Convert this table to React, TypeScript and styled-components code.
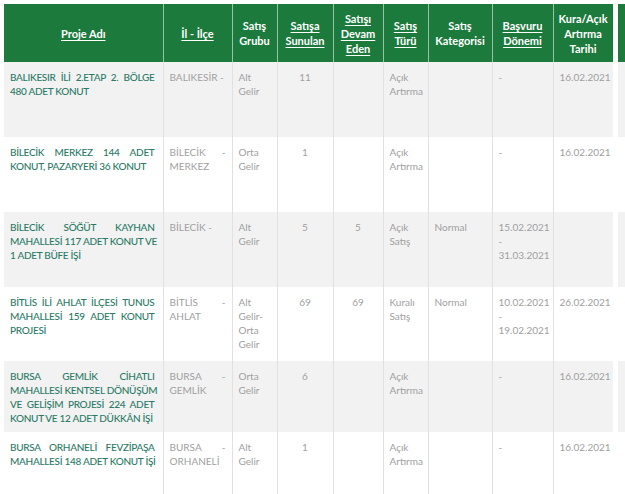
import React from "react";
import styled, { createGlobalStyle } from "styled-components";

const GlobalStyle = createGlobalStyle`
  html, body {
    margin: 0;
    padding: 0;
    background: #ffffff;
    overflow: hidden;
  }
  body {
    font-family: Lato, "Open Sans", Arial, sans-serif;
  }
`;

type Column = { title: string[]; width: number; sortable?: boolean };

const columns: Column[] = [
  { title: ["Proje Adı"], width: 159, sortable: true },
  { title: ["İl - İlçe"], width: 69, sortable: true },
  { title: ["Satış", "Grubu"], width: 45 },
  { title: ["Satışa", "Sunulan"], width: 56, sortable: true },
  { title: ["Satışı", "Devam", "Eden"], width: 50, sortable: true },
  { title: ["Satış", "Türü"], width: 45, sortable: true },
  { title: ["Satış", "Kategorisi"], width: 64 },
  { title: ["Başvuru", "Dönemi"], width: 61, sortable: true },
  { title: ["Kura/Açık", "Artırma", "Tarihi"], width: 62 },
  { title: [""], width: 10 },
];

type Row = {
  name: string[];
  place: string;
  group: string;
  offered: string;
  ongoing: string;
  type: string;
  category: string;
  period: string;
  date: string;
  height: number;
};

const rows: Row[] = [
  {
    name: ["BALIKESIR İLİ 2.ETAP 2. BÖLGE", "480 ADET KONUT"],
    place: "BALIKESİR -",
    group: "Alt Gelir",
    offered: "11",
    ongoing: "",
    type: "Açık Artırma",
    category: "",
    period: "-",
    date: "16.02.2021",
    height: 75,
  },
  {
    name: ["BİLECİK MERKEZ 144 ADET", "KONUT, PAZARYERİ 36 KONUT"],
    place: "BİLECİK - MERKEZ",
    group: "Orta Gelir",
    offered: "1",
    ongoing: "",
    type: "Açık Artırma",
    category: "",
    period: "-",
    date: "16.02.2021",
    height: 75,
  },
  {
    name: ["BİLECİK SÖĞÜT KAYHAN", "MAHALLESİ 117 ADET KONUT VE", "1 ADET BÜFE İŞİ"],
    place: "BİLECİK -",
    group: "Alt Gelir",
    offered: "5",
    ongoing: "5",
    type: "Açık Satış",
    category: "Normal",
    period: "15.02.2021 - 31.03.2021",
    date: "",
    height: 75,
  },
  {
    name: ["BİTLİS İLİ AHLAT İLÇESİ TUNUS", "MAHALLESİ 159 ADET KONUT", "PROJESİ"],
    place: "BİTLİS - AHLAT",
    group: "Alt Gelir- Orta Gelir",
    offered: "69",
    ongoing: "69",
    type: "Kuralı Satış",
    category: "Normal",
    period: "10.02.2021 - 19.02.2021",
    date: "26.02.2021",
    height: 74,
  },
  {
    name: [
      "BURSA GEMLİK CİHATLI",
      "MAHALLESİ KENTSEL DÖNÜŞÜM",
      "VE GELİŞİM PROJESİ 224 ADET",
      "KONUT VE 12 ADET DÜKKÂN İŞİ",
    ],
    place: "BURSA - GEMLİK",
    group: "Orta Gelir",
    offered: "6",
    ongoing: "",
    type: "Açık Artırma",
    category: "",
    period: "-",
    date: "16.02.2021",
    height: 71,
  },
  {
    name: ["BURSA ORHANELİ FEVZİPAŞA", "MAHALLESİ 148 ADET KONUT İŞİ"],
    place: "BURSA - ORHANELİ",
    group: "Alt Gelir",
    offered: "1",
    ongoing: "",
    type: "Açık Artırma",
    category: "",
    period: "-",
    date: "16.02.2021",
    height: 75,
  },
];

const Page = styled.div`
  padding: 4px 0 0 4px;
`;

const Table = styled.table`
  table-layout: fixed;
  border-collapse: collapse;
  width: 621px;
`;

const HeadCell = styled.th<{ $last?: boolean }>`
  background: #1d7a3d;
  color: #ffffff;
  font-size: 11px;
  font-weight: 700;
  line-height: 15px;
  height: 58px;
  padding: 0 2px;
  text-align: center;
  vertical-align: middle;
  border-right: 1px solid rgba(255, 255, 255, 0.55);
  border-left: ${(p) => (p.$last ? "5px solid #ffffff" : "0")};
`;

const HeadLabel = styled.span<{ $sortable?: boolean }>`
  text-decoration: ${(p) => (p.$sortable ? "underline" : "none")};
  text-underline-offset: 2px;
`;

const BodyRow = styled.tr<{ $shade: boolean }>`
  background: ${(p) => (p.$shade ? "#f2f2f2" : "#ffffff")};
`;

const Cell = styled.td<{ $center?: boolean; $name?: boolean; $last?: boolean }>`
  vertical-align: top;
  padding: 8px ${(p) => (p.$name ? "8px" : "6px")} 0 6px;
  font-size: 10px;
  line-height: 14px;
  color: ${(p) => (p.$name ? "#2b7a66" : "#a0a0a0")};
  font-weight: ${(p) => (p.$name ? 500 : 400)};
  text-align: ${(p) => (p.$center ? "center" : "justify")};
  text-align-last: ${(p) => (p.$center ? "center" : "left")};
  border-right: 1px solid #e1e1e1;
  border-left: ${(p) => (p.$last ? "5px solid #ffffff" : "0")};
`;

const NameLine = styled.span<{ $end: boolean }>`
  display: block;
  white-space: nowrap;
  letter-spacing: -0.3px;
  text-align: justify;
  text-align-last: ${(p) => (p.$end ? "left" : "justify")};
`;

export default function App() {
  return (
    <>
      <GlobalStyle />
      <Page>
        <Table>
          <colgroup>
            {columns.map((c, i) => (
              <col key={i} style={{ width: c.width }} />
            ))}
          </colgroup>
          <thead>
            <tr>
              {columns.map((c, i) => (
                <HeadCell key={i} $last={i === columns.length - 1}>
                  {c.title.map((line, j) => (
                    <React.Fragment key={j}>
                      {j > 0 && <br />}
                      <HeadLabel $sortable={c.sortable}>{line}</HeadLabel>
                    </React.Fragment>
                  ))}
                </HeadCell>
              ))}
            </tr>
          </thead>
          <tbody>
            {rows.map((r, i) => (
              <BodyRow key={i} $shade={i % 2 === 0} style={{ height: r.height }}>
                <Cell $name>
                  {r.name.map((line, j) => (
                    <NameLine key={j} $end={j === r.name.length - 1}>
                      {line}
                    </NameLine>
                  ))}
                </Cell>
                <Cell>{r.place}</Cell>
                <Cell>{r.group}</Cell>
                <Cell $center>{r.offered}</Cell>
                <Cell $center>{r.ongoing}</Cell>
                <Cell>{r.type}</Cell>
                <Cell>{r.category}</Cell>
                <Cell>{r.period}</Cell>
                <Cell>{r.date}</Cell>
                <Cell $last />
              </BodyRow>
            ))}
          </tbody>
        </Table>
      </Page>
    </>
  );
}
